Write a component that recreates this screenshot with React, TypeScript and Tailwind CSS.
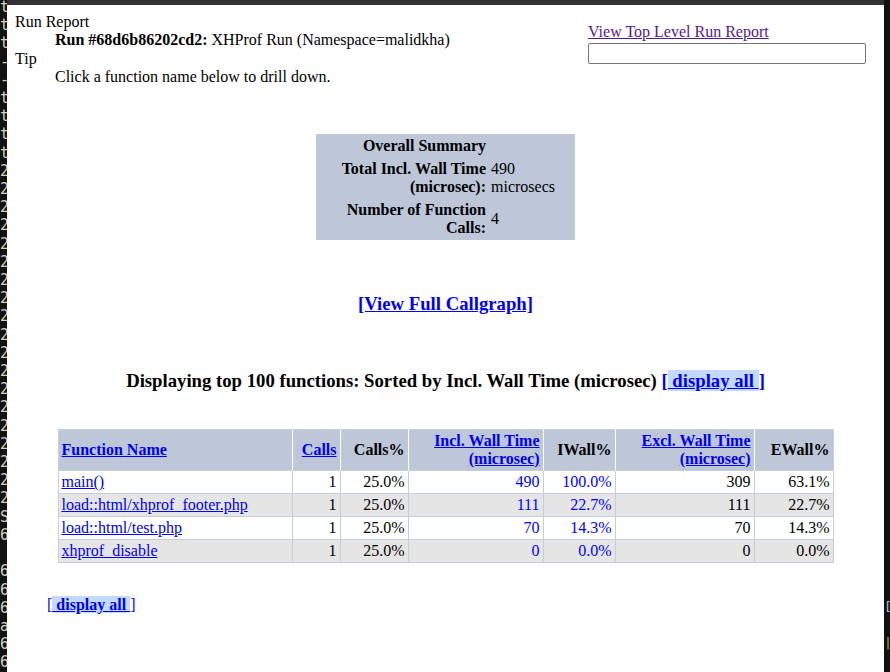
const leftLines = [
  "t", "t", "t", "-", "-", "t", "t", "t", "t",
  "2", "2", "2", "2", "2", "2", "2", "2", "2", "2",
  "2", "2", "2", "2", "2", "2", "2", "2", "2",
  "S", "6", " ", "6", "6", "6", "a", "6", "6",
];

const rows = [
  { name: "main()", calls: "1", callsPct: "25.0%", incl: "490", iwall: "100.0%", excl: "309", ewall: "63.1%" },
  { name: "load::html/xhprof_footer.php", calls: "1", callsPct: "25.0%", incl: "111", iwall: "22.7%", excl: "111", ewall: "22.7%" },
  { name: "load::html/test.php", calls: "1", callsPct: "25.0%", incl: "70", iwall: "14.3%", excl: "70", ewall: "14.3%" },
  { name: "xhprof_disable", calls: "1", callsPct: "25.0%", incl: "0", iwall: "0.0%", excl: "0", ewall: "0.0%" },
];

function TerminalStrip() {
  return (
    <div className="w-[7px] shrink-0 overflow-hidden bg-[#121212]">
      <div className="-mt-[2px] font-['DejaVu_Sans_Mono',monospace] text-[15px] leading-[18.2px] text-[#d9cfb6] whitespace-pre">
        {leftLines.map((c, i) => (
          <div key={i}>{c}</div>
        ))}
      </div>
    </div>
  );
}

function DisplayAll() {
  return (
    <a href="#" className="text-[#0000ee] underline">
      [<b className="bg-[#c3d9ff]"> display all </b>]
    </a>
  );
}

export default function App() {
  return (
    <div className="flex h-[672px] w-[890px] overflow-hidden bg-[#111]">
      <TerminalStrip />

      <div className="flex flex-1 flex-col">
        <div className="h-[5px] shrink-0 bg-[#323232]" />
        <div className="flex-1 bg-white px-[8px] pt-[8px] font-['Liberation_Serif','Times_New_Roman',serif] text-[16px] leading-[18.4px] text-black">
          {/* report info + top level link */}
          <div className="flex justify-between">
            <div>
              <div>Run Report</div>
              <div className="ml-[40px]">
                <b>Run #68d6b86202cd2:</b> XHProf Run (Namespace=malidkha)
              </div>
              <div>Tip</div>
              <div className="ml-[40px]">Click a function name below to drill down.</div>
            </div>
            <div className="mr-[10px] w-[278px] pt-[10px]">
              <a href="#" className="text-[#551a8b] underline">
                View Top Level Run Report
              </a>
              <input
                type="text"
                className="mt-[2px] block h-[21px] w-full rounded-[2px] border border-[#767676] bg-white"
              />
            </div>
          </div>

          {/* overall summary */}
          <div className="mx-auto mt-[47px] flex w-[259px] flex-col gap-[5px] bg-[#bdc7d8] pb-[3px] pt-[3px] leading-[18px]">
            <div className="flex">
              <div className="w-[170px] text-right font-bold">Overall Summary</div>
            </div>
            <div className="flex">
              <div className="w-[170px] text-right font-bold">
                Total Incl. Wall Time
                <br />
                (microsec):
              </div>
              <div className="ml-[5px]">
                490
                <br />
                microsecs
              </div>
            </div>
            <div className="flex items-center">
              <div className="w-[170px] text-right font-bold">
                Number of Function
                <br />
                Calls:
              </div>
              <div className="ml-[5px]">4</div>
            </div>
          </div>

          <div className="mt-[53px] text-center text-[18.72px] font-bold leading-[21.5px]">
            <a href="#" className="text-[#0000ee] underline">
              [View Full Callgraph]
            </a>
          </div>

          <div className="mt-[56px] text-center text-[18.72px] font-bold leading-[21.5px]">
            Displaying top 100 functions: Sorted by Incl. Wall Time (microsec) <DisplayAll />
          </div>

          {/* function table */}
          <table className="mx-auto mt-[37px] w-[775px] table-fixed border-collapse border border-[#c8cfdb]">
            <colgroup>
              <col className="w-[234px]" />
              <col className="w-[48px]" />
              <col className="w-[68px]" />
              <col className="w-[135px]" />
              <col className="w-[72px]" />
              <col className="w-[139px]" />
              <col className="w-[79px]" />
            </colgroup>
            <thead>
              <tr className="bg-[#bdc7d8] font-bold">
                <th className="px-[3px] py-[2px] text-left align-middle">
                  <a href="#" className="text-[#0000ee] underline">Function Name</a>
                </th>
                <th className="border-l border-white px-[3px] py-[2px] text-right align-middle">
                  <a href="#" className="text-[#0000ee] underline">Calls</a>
                </th>
                <th className="border-l border-white px-[3px] py-[2px] text-right align-middle">Calls%</th>
                <th className="border-l border-white px-[3px] py-[2px] text-right align-middle">
                  <a href="#" className="text-[#0000ee] underline">
                    Incl. Wall Time
                    <br />
                    (microsec)
                  </a>
                </th>
                <th className="border-l border-white px-[3px] py-[2px] text-right align-middle">IWall%</th>
                <th className="border-l border-white px-[3px] py-[2px] text-right align-middle">
                  <a href="#" className="text-[#0000ee] underline">
                    Excl. Wall Time
                    <br />
                    (microsec)
                  </a>
                </th>
                <th className="border-l border-white px-[3px] py-[2px] text-right align-middle">EWall%</th>
              </tr>
            </thead>
            <tbody className="leading-[18px]">
              {rows.map((r, i) => (
                <tr key={r.name} className={i % 2 === 1 ? "bg-[#e5e5e5]" : "bg-white"}>
                  <td className="border-t border-[#c6cdda] px-[3px] py-[2px]">
                    <a href="#" className="text-[#0000ee] underline">{r.name}</a>
                  </td>
                  <td className="border-l border-t border-[#c6cdda] px-[3px] py-[2px] text-right">{r.calls}</td>
                  <td className="border-l border-t border-[#c6cdda] px-[3px] py-[2px] text-right">{r.callsPct}</td>
                  <td className="border-l border-t border-[#c6cdda] px-[3px] py-[2px] text-right text-[#0000ff]">{r.incl}</td>
                  <td className="border-l border-t border-[#c6cdda] px-[3px] py-[2px] text-right text-[#0000ff]">{r.iwall}</td>
                  <td className="border-l border-t border-[#c6cdda] px-[3px] py-[2px] text-right">{r.excl}</td>
                  <td className="border-l border-t border-[#c6cdda] px-[3px] py-[2px] text-right">{r.ewall}</td>
                </tr>
              ))}
            </tbody>
          </table>

          <div className="ml-[32px] mt-[33px]">
            <DisplayAll />
          </div>
        </div>
      </div>

      <div className="w-[6px] shrink-0 overflow-hidden bg-[#111]">
        <div className="mt-[598px] font-['DejaVu_Sans_Mono',monospace] text-[13px] leading-[18px] whitespace-pre">
          <div className="text-[#a8c0e8]">[</div>
          <div> </div>
          <div className="text-[#c0a040]">|</div>
        </div>
      </div>
    </div>
  );
}
